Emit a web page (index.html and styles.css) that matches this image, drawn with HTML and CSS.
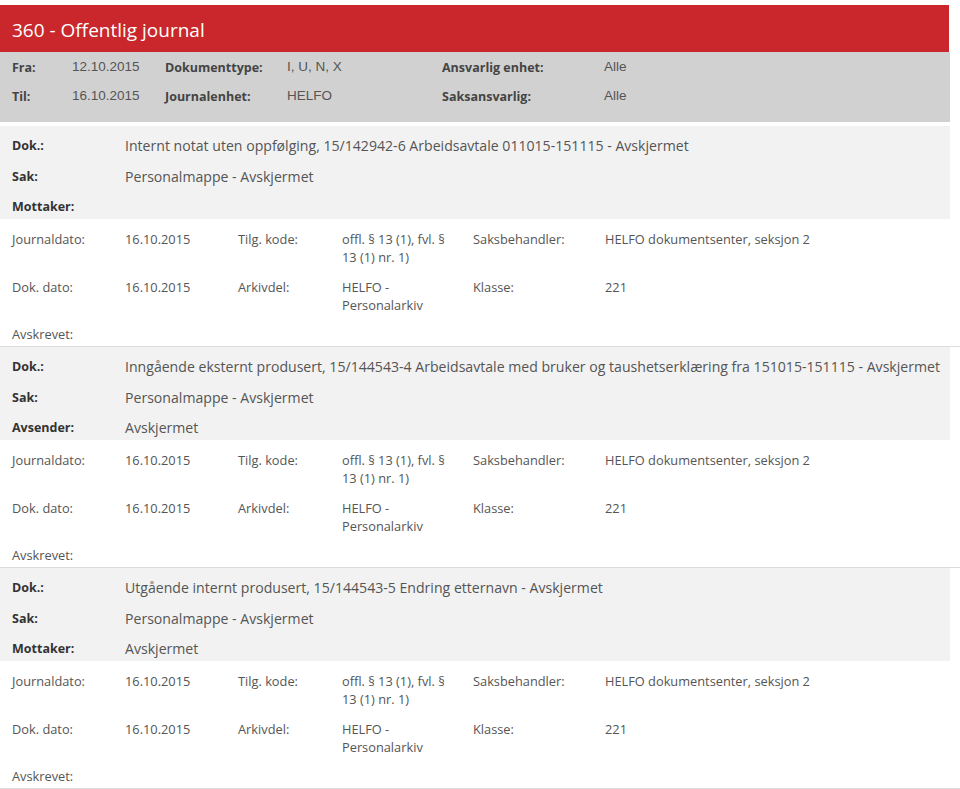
FILE: index.html
```html
<!DOCTYPE html>
<html lang="no">
<head>
  <meta charset="UTF-8" />
  <title>360 - Offentlig journal</title>
  <link rel="stylesheet" href="styles.css">
</head>
<body>

<div class="page">
  <header class="title-bar">360 - Offentlig journal</header>

  <div class="filters">
    <span class="f-label">Fra:</span>
    <span class="f-value">12.10.2015</span>
    <span class="f-label">Dokumenttype:</span>
    <span class="f-value">I, U, N, X</span>
    <span class="f-label">Ansvarlig enhet:</span>
    <span class="f-value">Alle</span>

    <span class="f-label">Til:</span>
    <span class="f-value">16.10.2015</span>
    <span class="f-label">Journalenhet:</span>
    <span class="f-value">HELFO</span>
    <span class="f-label">Saksansvarlig:</span>
    <span class="f-value">Alle</span>
  </div>

  <!-- record 1 -->
  <div class="record">
    <div class="doc">
      <span class="d-label">Dok.:</span>
      <span class="d-value">Internt notat uten oppfølging, 15/142942-6 Arbeidsavtale 011015-151115 - Avskjermet</span>
      <span class="d-label">Sak:</span>
      <span class="d-value">Personalmappe - Avskjermet</span>
      <span class="d-label">Mottaker:</span>
      <span class="d-value"></span>
    </div>
    <div class="meta">
      <span>Journaldato:</span>
      <span>16.10.2015</span>
      <span>Tilg. kode:</span>
      <span class="wrap">offl. § 13 (1), fvl. § 13 (1) nr. 1)</span>
      <span>Saksbehandler:</span>
      <span>HELFO dokumentsenter, seksjon 2</span>

      <span>Dok. dato:</span>
      <span>16.10.2015</span>
      <span>Arkivdel:</span>
      <span class="wrap">HELFO - Personalarkiv</span>
      <span>Klasse:</span>
      <span>221</span>

      <span class="full">Avskrevet:</span>
    </div>
  </div>

  <!-- record 2 -->
  <div class="record">
    <div class="doc">
      <span class="d-label">Dok.:</span>
      <span class="d-value">Inngående eksternt produsert, 15/144543-4 Arbeidsavtale med bruker og taushetserklæring fra 151015-151115 - Avskjermet</span>
      <span class="d-label">Sak:</span>
      <span class="d-value">Personalmappe - Avskjermet</span>
      <span class="d-label">Avsender:</span>
      <span class="d-value">Avskjermet</span>
    </div>
    <div class="meta">
      <span>Journaldato:</span>
      <span>16.10.2015</span>
      <span>Tilg. kode:</span>
      <span class="wrap">offl. § 13 (1), fvl. § 13 (1) nr. 1)</span>
      <span>Saksbehandler:</span>
      <span>HELFO dokumentsenter, seksjon 2</span>

      <span>Dok. dato:</span>
      <span>16.10.2015</span>
      <span>Arkivdel:</span>
      <span class="wrap">HELFO - Personalarkiv</span>
      <span>Klasse:</span>
      <span>221</span>

      <span class="full">Avskrevet:</span>
    </div>
  </div>

  <!-- record 3 -->
  <div class="record">
    <div class="doc">
      <span class="d-label">Dok.:</span>
      <span class="d-value">Utgående internt produsert, 15/144543-5 Endring etternavn - Avskjermet</span>
      <span class="d-label">Sak:</span>
      <span class="d-value">Personalmappe - Avskjermet</span>
      <span class="d-label">Mottaker:</span>
      <span class="d-value">Avskjermet</span>
    </div>
    <div class="meta">
      <span>Journaldato:</span>
      <span>16.10.2015</span>
      <span>Tilg. kode:</span>
      <span class="wrap">offl. § 13 (1), fvl. § 13 (1) nr. 1)</span>
      <span>Saksbehandler:</span>
      <span>HELFO dokumentsenter, seksjon 2</span>

      <span>Dok. dato:</span>
      <span>16.10.2015</span>
      <span>Arkivdel:</span>
      <span class="wrap">HELFO - Personalarkiv</span>
      <span>Klasse:</span>
      <span>221</span>

      <span class="full">Avskrevet:</span>
    </div>
  </div>
</div>

</body>
</html>
```

FILE: styles.css
```css
body {
  margin: 0;
  font-family: 'Open Sans', 'Noto Sans', sans-serif;
  background-color: #fff;
  color: #444;
}
.page {
  width: 960px;
  padding-top: 5px;
}
.title-bar {
  margin-right: 11px;
  height: 44px;
  line-height: 44px;
  padding: 3px 0 0 12px;
  background-color: #c9272b;
  color: #fff;
  font-size: 19px;
}
.filters {
  margin-right: 10px;
  display: grid;
  grid-template-columns: 60px 93px 122px 155px 162px 1fr;
  row-gap: 9px;
  padding: 6px 0 15px 12px;
  background-color: #d1d1d1;
  line-height: 20px;
}
.f-label {
  font-weight: bold;
  font-size: 12.5px;
  color: #444;
}
.f-value {
  font-family: 'Liberation Sans', Arial, sans-serif;
  font-size: 13.5px;
  color: #555;
  position: relative;
  top: -1px;
}
.record {
  margin-top: 4px;
}
.record + .record {
  margin-top: 0;
}
.doc {
  margin-right: 10px;
  display: grid;
  grid-template-columns: 113px 1fr;
  row-gap: 8.5px;
  padding: 9px 0 1px 12px;
  background-color: #f2f2f2;
  line-height: 22px;
}
.d-label {
  font-weight: bold;
  font-size: 12.5px;
  color: #333;
}
.d-value {
  font-size: 14.1px;
  color: #555;
  white-space: nowrap;
}
.meta {
  display: grid;
  grid-template-columns: 113px 113px 104px 131px 132px 1fr;
  row-gap: 11.5px;
  padding: 11px 0 3px 12px;
  border-bottom: 1px solid #dcdcdc;
  font-size: 12.8px;
  line-height: 18px;
  color: #555;
}
.meta .wrap {
  padding-right: 14px;
}
.meta .full {
  grid-column: 1 / -1;
}
```
